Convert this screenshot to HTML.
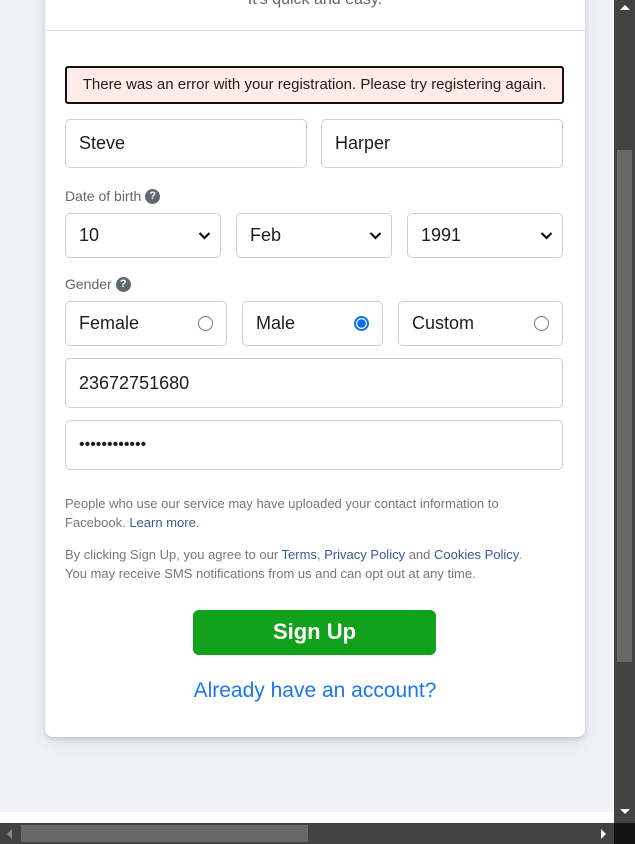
<!DOCTYPE html>
<html><head><meta charset="utf-8"><style>
*{box-sizing:border-box;margin:0;padding:0}
body{width:635px;height:844px;overflow:hidden;background:#f0f2f5;font-family:"Liberation Sans",Arial,sans-serif;position:relative}
.a{position:absolute}
.card{left:45px;top:-20px;width:540px;height:757px;background:#fff;border-radius:8px;box-shadow:0 2px 6px rgba(0,0,0,.15),0 8px 16px rgba(0,0,0,.06)}
.in{position:absolute;border:1px solid #ccd0d5;border-radius:5px;background:#fff;font-size:18px;color:#1c1e21;padding-left:13px;display:flex;align-items:center}
.lbl{font-size:14px;color:#606770;display:flex;align-items:center;height:16px}
.q{display:inline-block;width:15px;height:15px;border-radius:50%;background:#606770;color:#fff;font-size:11px;font-weight:bold;text-align:center;line-height:15px;margin-left:4px}
.chev{position:absolute;right:9px;top:50%;margin-top:-5px}
.rad{position:absolute;right:13px;top:50%;margin-top:-8px;width:15px;height:15px;border-radius:50%;border:1px solid #767676;background:#fff}
.small{font-size:13px;color:#777;line-height:19px}
.lk{color:#385898}
</style></head><body>
<div class="a card"></div>
<div class="a" style="left:45px;top:-9px;width:540px;text-align:center;font-size:16px;color:#606770">It's quick and easy.</div>
<div class="a" style="left:45px;top:30px;width:540px;height:1px;background:#dadde1"></div>
<div class="a" style="left:65px;top:66px;width:499px;height:38px;border:2px solid #111;border-radius:3px;background:#ffebe8;font-size:15px;color:#1c1e21;text-align:center;line-height:34px;white-space:nowrap">There was an error with your registration. Please try registering again.</div>
<div class="in" style="left:65px;top:119px;width:242px;height:49px">Steve</div>
<div class="in" style="left:321px;top:119px;width:242px;height:49px">Harper</div>
<div class="a lbl" style="left:65px;top:188px">Date of birth<span class="q">?</span></div>
<div class="in" style="left:65px;top:213px;width:156px;height:45px">10<svg class="chev" width="13" height="9" viewBox="0 0 13 9"><path d="M1.5 2 L6.5 7 L11.5 2" stroke="#111" stroke-width="2.2" fill="none"/></svg></div>
<div class="in" style="left:236px;top:213px;width:156px;height:45px">Feb<svg class="chev" width="13" height="9" viewBox="0 0 13 9"><path d="M1.5 2 L6.5 7 L11.5 2" stroke="#111" stroke-width="2.2" fill="none"/></svg></div>
<div class="in" style="left:407px;top:213px;width:156px;height:45px">1991<svg class="chev" width="13" height="9" viewBox="0 0 13 9"><path d="M1.5 2 L6.5 7 L11.5 2" stroke="#111" stroke-width="2.2" fill="none"/></svg></div>
<div class="a lbl" style="left:65px;top:276px">Gender<span class="q">?</span></div>
<div class="in" style="left:65px;top:301px;width:162px;height:45px">Female<span class="rad"></span></div>
<div class="in" style="left:242px;top:301px;width:141px;height:45px">Male<span class="rad" style="border:2px solid #0b6ff0;background:radial-gradient(circle,#0b6ff0 0 4px,#fff 4.5px)"></span></div>
<div class="in" style="left:398px;top:301px;width:165px;height:45px">Custom<span class="rad"></span></div>
<div class="in" style="left:65px;top:358px;width:498px;height:50px">23672751680</div>
<div class="in" style="left:65px;top:420px;width:498px;height:50px;font-size:16px">••••••••••••</div>
<div class="a small" style="left:65px;top:494px;width:470px">People who use our service may have uploaded your contact information to Facebook. <span class="lk">Learn more</span>.</div>
<div class="a small" style="left:65px;top:545px;width:490px">By clicking Sign Up, you agree to our <span class="lk">Terms</span>, <span class="lk">Privacy Policy</span> and <span class="lk">Cookies Policy</span>.<br>You may receive SMS notifications from us and can opt out at any time.</div>
<div class="a" style="left:193px;top:610px;width:243px;height:45px;background:#12a11a;border-radius:6px;color:#fff;font-size:22px;font-weight:bold;text-align:center;line-height:44px">Sign Up</div>
<div class="a" style="left:45px;top:679px;width:540px;text-align:center;font-size:21px;color:#1877f2">Already have an account?</div>
<div class="a" style="left:0;top:812px;width:614px;height:11px;background:#fff"></div>
<div class="a" style="left:614px;top:0;width:21px;height:823px;background:#424242"></div>
<div class="a" style="left:617px;top:150px;width:15px;height:512px;background:#686868"></div>
<div class="a" style="left:620px;top:5px;width:0;height:0;border-left:5px solid transparent;border-right:5px solid transparent;border-bottom:5px solid #fff"></div>
<div class="a" style="left:620px;top:809px;width:0;height:0;border-left:5px solid transparent;border-right:5px solid transparent;border-top:5px solid #fff"></div>
<div class="a" style="left:0;top:823px;width:614px;height:21px;background:#424242"></div>
<div class="a" style="left:21px;top:825px;width:287px;height:17px;background:#686868"></div>
<div class="a" style="left:7px;top:829px;width:0;height:0;border-top:5px solid transparent;border-bottom:5px solid transparent;border-right:5px solid #888"></div>
<div class="a" style="left:601px;top:829px;width:0;height:0;border-top:5px solid transparent;border-bottom:5px solid transparent;border-left:5px solid #fff"></div>
<div class="a" style="left:614px;top:823px;width:21px;height:21px;background:#141414"></div>
</body></html>
